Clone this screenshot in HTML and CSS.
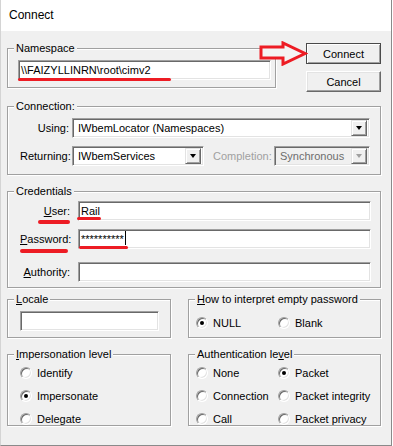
FILE: index.html
```html
<!DOCTYPE html>
<html lang="en">
<head>
  <meta charset="UTF-8">
  <title>Connect</title>
  <link rel="stylesheet" href="styles.css">
</head>
<body>
  <div class="window">
    <div class="titlebar">Connect</div>
    <div class="dialog">
      <div class="row-top">
        <fieldset class="group group-namespace">
          <legend>Namespace</legend>
          <div class="group-body">
            <div class="edit edit-namespace">\\FAIZYLLINRN\root\cimv2</div>
          </div>
        </fieldset>
        <div class="buttons">
          <button class="btn btn-default">Connect</button>
          <button class="btn">Cancel</button>
        </div>
      </div>

      <fieldset class="group group-connection">
        <legend>Connection:</legend>
        <div class="group-body">
          <div class="form-row">
            <span class="field-label">Using:</span>
            <div class="combo combo-using">
              <span class="combo-text">IWbemLocator (Namespaces)</span>
              <span class="combo-btn"></span>
            </div>
          </div>
          <div class="form-row form-row-second">
            <span class="field-label">Returning:</span>
            <div class="combo combo-returning">
              <span class="combo-text">IWbemServices</span>
              <span class="combo-btn"></span>
            </div>
            <span class="disabled-label">Completion:</span>
            <div class="combo combo-disabled">
              <span class="combo-text">Synchronous</span>
              <span class="combo-btn"></span>
            </div>
          </div>
        </div>
      </fieldset>

      <fieldset class="group group-credentials">
        <legend>Credentials</legend>
        <div class="group-body">
          <div class="form-row cred-row">
            <span class="field-label"><u>U</u>ser:</span>
            <div class="edit edit-cred">Rail</div>
          </div>
          <div class="form-row cred-row cred-password">
            <span class="field-label"><u>P</u>assword:</span>
            <div class="edit edit-cred"><span class="stars">**********</span><span class="caret"></span></div>
          </div>
          <div class="form-row cred-row cred-authority">
            <span class="field-label"><u>A</u>uthority:</span>
            <div class="edit edit-cred"></div>
          </div>
        </div>
      </fieldset>

      <div class="row-pair row-locale">
        <fieldset class="group group-left">
          <legend><u>L</u>ocale</legend>
          <div class="group-body locale-body">
            <div class="edit edit-locale"></div>
          </div>
        </fieldset>
        <fieldset class="group group-right">
          <legend><u>H</u>ow to interpret empty password</legend>
          <div class="group-body radio-grid empty-body">
            <span class="radio-item"><span class="radio checked"></span>NULL</span>
            <span class="radio-item"><span class="radio"></span>Blank</span>
          </div>
        </fieldset>
      </div>

      <div class="row-pair row-levels">
        <fieldset class="group group-left">
          <legend><u>I</u>mpersonation level</legend>
          <div class="group-body radio-list imp-body">
            <span class="radio-item"><span class="radio"></span>Identify</span>
            <span class="radio-item"><span class="radio checked"></span>Impersonate</span>
            <span class="radio-item"><span class="radio"></span>Delegate</span>
          </div>
        </fieldset>
        <fieldset class="group group-right">
          <legend>Authentication le<u>v</u>el</legend>
          <div class="group-body radio-grid auth-body">
            <span class="radio-item"><span class="radio"></span>None</span>
            <span class="radio-item"><span class="radio checked"></span>Packet</span>
            <span class="radio-item"><span class="radio"></span>Connection</span>
            <span class="radio-item"><span class="radio"></span>Packet integrity</span>
            <span class="radio-item"><span class="radio"></span>Call</span>
            <span class="radio-item"><span class="radio"></span>Packet privacy</span>
          </div>
        </fieldset>
      </div>
    </div>

    <!-- red annotations drawn over the dialog -->
    <div class="mark mark-namespace"></div>
    <div class="mark mark-user-label"></div>
    <div class="mark mark-user-value"></div>
    <div class="mark mark-pass-label"></div>
    <div class="mark mark-pass-value"></div>
    <svg class="mark-arrow" width="50" height="25" viewBox="0 0 50 25">
      <polygon points="3,6 25,6 25,2 47,12.5 25,23 25,17 3,17" fill="#f4f4f4" stroke="#ed1c24" stroke-width="3"/>
    </svg>
  </div>
</body>
</html>
```

FILE: styles.css
```css
* {
  box-sizing: border-box;
}
body {
  margin: 0;
  background: #fff;
  font-family: "Liberation Sans", Arial, sans-serif;
  font-size: 11px;
  color: #000;
}
.window {
  position: relative;
  width: 392px;
  height: 446px;
  background: #f0f0f0;
  border-left: 1px solid #d4d4d4;
  border-right: 1px solid #8a8a8a;
  border-bottom: 1px solid #8a8a8a;
}
.titlebar {
  height: 31px;
  line-height: 31px;
  padding-left: 8px;
  background: #fff;
  font-size: 12px;
}
.dialog {
  padding: 11px 10px 0 6px;
}

/* group boxes */
.group {
  margin: 0;
  padding: 0;
  min-width: 0;
  border: 1px solid #a0a0a0;
  box-shadow: inset 1px 1px 0 #fff, 1px 1px 0 #fff;
}
.group legend {
  margin-left: 6px;
  padding: 0 2px;
  line-height: 13px;
  background: #f0f0f0;
}
.row-top {
  display: flex;
  align-items: flex-start;
  height: 58px;
}
.group-namespace {
  width: 269px;
}
.group-namespace .group-body {
  padding: 5px 4px 7px 10px;
}
.buttons {
  display: flex;
  flex-direction: column;
  gap: 7px;
  margin: 1px 0 0 30px;
  width: 75px;
}

/* buttons */
.btn {
  height: 21px;
  padding: 0;
  font-family: inherit;
  font-size: 11px;
  color: #000;
  background: #f0f0f0;
  border: 1px solid;
  border-color: #fff #696969 #696969 #fff;
  box-shadow: inset -1px -1px 0 #a0a0a0, inset 1px 1px 0 #e3e3e3;
}
.btn-default {
  border: 1px solid #4a4a4a;
  box-shadow: inset 1px 1px 0 #fff, inset -1px -1px 0 #a0a0a0;
}

/* edits and combos */
.edit,
.combo {
  height: 20px;
  background: #fff;
  border: 1px solid;
  border-color: #a0a0a0 #fff #fff #a0a0a0;
  box-shadow: inset 1px 1px 0 #696969, inset -1px -1px 0 #e3e3e3;
}
.edit {
  padding: 0 2px 0 2px;
  line-height: 18px;
  white-space: nowrap;
}
.edit-namespace {
  width: 253px;
}
.combo {
  display: flex;
  align-items: center;
  padding: 2px;
}
.combo-text {
  flex: 1;
  padding-left: 3px;
  white-space: nowrap;
}
.combo-btn {
  position: relative;
  width: 16px;
  height: 16px;
  background: #f0f0f0;
  border: 1px solid;
  border-color: #e3e3e3 #696969 #696969 #e3e3e3;
  box-shadow: inset 1px 1px 0 #fff, inset -1px -1px 0 #a0a0a0;
}
.combo-btn::after {
  content: "";
  position: absolute;
  left: 4px;
  top: 5px;
  border-left: 3.5px solid transparent;
  border-right: 3.5px solid transparent;
  border-top: 4px solid #000;
}

/* connection group */
.group-connection .group-body {
  padding: 5px 10px 8px 12px;
}
.form-row {
  display: flex;
  align-items: center;
}
.form-row-second {
  margin-top: 8px;
}
.field-label {
  width: 49px;
  margin-right: 3px;
  text-align: right;
  white-space: nowrap;
}
.combo-using {
  width: 298px;
}
.combo-returning {
  width: 132px;
}
.disabled-label {
  margin-left: 9px;
  color: #a0a0a0;
}
.combo-disabled {
  width: 96px;
  margin-left: auto;
  background: #f0f0f0;
  color: #6d6d6d;
}
.combo-disabled .combo-btn::after {
  border-top-color: #a0a0a0;
}

/* credentials */
.group-credentials {
  margin-top: 10px;
}
.group-credentials .group-body {
  padding: 3px 9px 5px 12px;
}
.cred-row .field-label {
  width: 50px;
  margin-right: 8px;
}
.cred-password {
  margin-top: 8px;
}
.cred-authority {
  margin-top: 13px;
}
.edit-cred {
  width: 293px;
}
.stars {
  vertical-align: top;
}
.caret {
  display: inline-block;
  width: 1px;
  height: 14px;
  margin-left: 1px;
  vertical-align: -2px;
  background: #000;
}

/* bottom pairs */
.row-pair {
  display: flex;
}
.row-locale {
  margin-top: 5px;
}
.row-levels {
  margin-top: 10px;
}
.group-left {
  width: 164px;
}
.group-right {
  width: 193px;
  margin-left: 17px;
}
.locale-body {
  padding: 5px 0 6px 12px;
}
.edit-locale {
  width: 139px;
}
.radio-grid {
  display: grid;
  grid-template-columns: 82px auto;
  row-gap: 10px;
  padding-left: 7px;
}
.empty-body {
  padding-top: 10px;
}
.auth-body {
  padding-top: 5px;
}
.radio-list {
  display: flex;
  flex-direction: column;
  gap: 10px;
  padding: 5px 0 0 12px;
}
.radio-item {
  display: flex;
  align-items: center;
  height: 13px;
  white-space: nowrap;
}
.radio {
  position: relative;
  width: 12px;
  height: 12px;
  margin-right: 5px;
  border-radius: 50%;
  background: #fff;
  border: 1px solid;
  border-color: #a0a0a0 #fff #fff #a0a0a0;
  box-shadow: inset 1px 1px 0 #696969, inset -1px -1px 0 #e3e3e3;
}
.radio.checked::after {
  content: "";
  position: absolute;
  left: 3px;
  top: 3px;
  width: 4px;
  height: 4px;
  border-radius: 50%;
  background: #000;
}

/* red annotations */
.mark {
  position: absolute;
  height: 3px;
  border-radius: 2px;
  background: #ed1c24;
}
.mark-namespace {
  left: 17px;
  top: 78px;
  width: 153px;
}
.mark-user-label {
  left: 37px;
  top: 220px;
  width: 32px;
  height: 4px;
}
.mark-user-value {
  left: 76px;
  top: 217px;
  width: 24px;
}
.mark-pass-label {
  left: 19px;
  top: 249px;
  width: 48px;
  height: 4px;
}
.mark-pass-value {
  left: 78px;
  top: 246px;
  width: 49px;
}
.mark-arrow {
  position: absolute;
  left: 257px;
  top: 41px;
}
```
